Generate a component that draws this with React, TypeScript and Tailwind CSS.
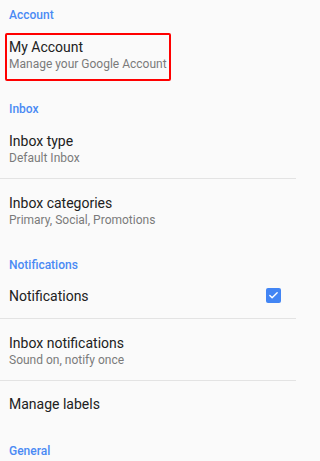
import { Check } from 'lucide-react';

type Row = {
  title: string;
  subtitle?: string;
  checked?: boolean;
  divider?: boolean;
  highlight?: boolean;
};

type Section = {
  header: string;
  first?: boolean;
  rows: Row[];
};

const sections: Section[] = [
  {
    header: 'Account',
    first: true,
    rows: [{ title: 'My Account', subtitle: 'Manage your Google Account', highlight: true }],
  },
  {
    header: 'Inbox',
    rows: [
      { title: 'Inbox type', subtitle: 'Default Inbox', divider: true },
      { title: 'Inbox categories', subtitle: 'Primary, Social, Promotions' },
    ],
  },
  {
    header: 'Notifications',
    rows: [
      { title: 'Notifications', checked: true, divider: true },
      { title: 'Inbox notifications', subtitle: 'Sound on, notify once', divider: true },
      { title: 'Manage labels' },
    ],
  },
  {
    header: 'General',
    rows: [],
  },
];

function SettingRow({ row }: { row: Row }) {
  const border = row.divider ? 'border-b border-[#e3e3e3]' : '';
  if (!row.subtitle) {
    return (
      <div className={`flex h-[46px] items-center justify-between pl-[9px] pr-[15px] ${border}`}>
        <span className="text-[14px] leading-[18px] text-[#212121]">{row.title}</span>
        {row.checked && (
          <span className="flex h-[15px] w-[15px] items-center justify-center rounded-[2px] bg-[#4285f4]">
            <Check className="h-[11px] w-[11px] text-white" strokeWidth={3} />
          </span>
        )}
      </div>
    );
  }
  return (
    <div className={`relative flex h-[62px] flex-col pl-[9px] pt-[15px] ${border}`}>
      <span className="text-[14px] leading-[18px] text-[#212121]">{row.title}</span>
      <span className="text-[12px] leading-[16px] text-[#7a7a7a]">{row.subtitle}</span>
      {row.highlight && (
        <span className="absolute left-[5px] top-[10px] h-[48px] w-[166px] rounded-[2px] border-2 border-[#ff0000]" />
      )}
    </div>
  );
}

export default function App() {
  return (
    <div className="h-[461px] w-full overflow-hidden bg-[#fafafa] font-['Roboto',sans-serif]">
      <div className="w-[296px]">
        {sections.map((section) => (
          <div key={section.header}>
            <div
              className={`${section.first ? 'pt-[7px]' : 'pt-4'} pl-[9px] text-[12px] font-medium leading-[16px] text-[#4a8af4]`}
            >
              {section.header}
            </div>
            {section.rows.map((row) => (
              <SettingRow key={row.title} row={row} />
            ))}
          </div>
        ))}
      </div>
    </div>
  );
}
